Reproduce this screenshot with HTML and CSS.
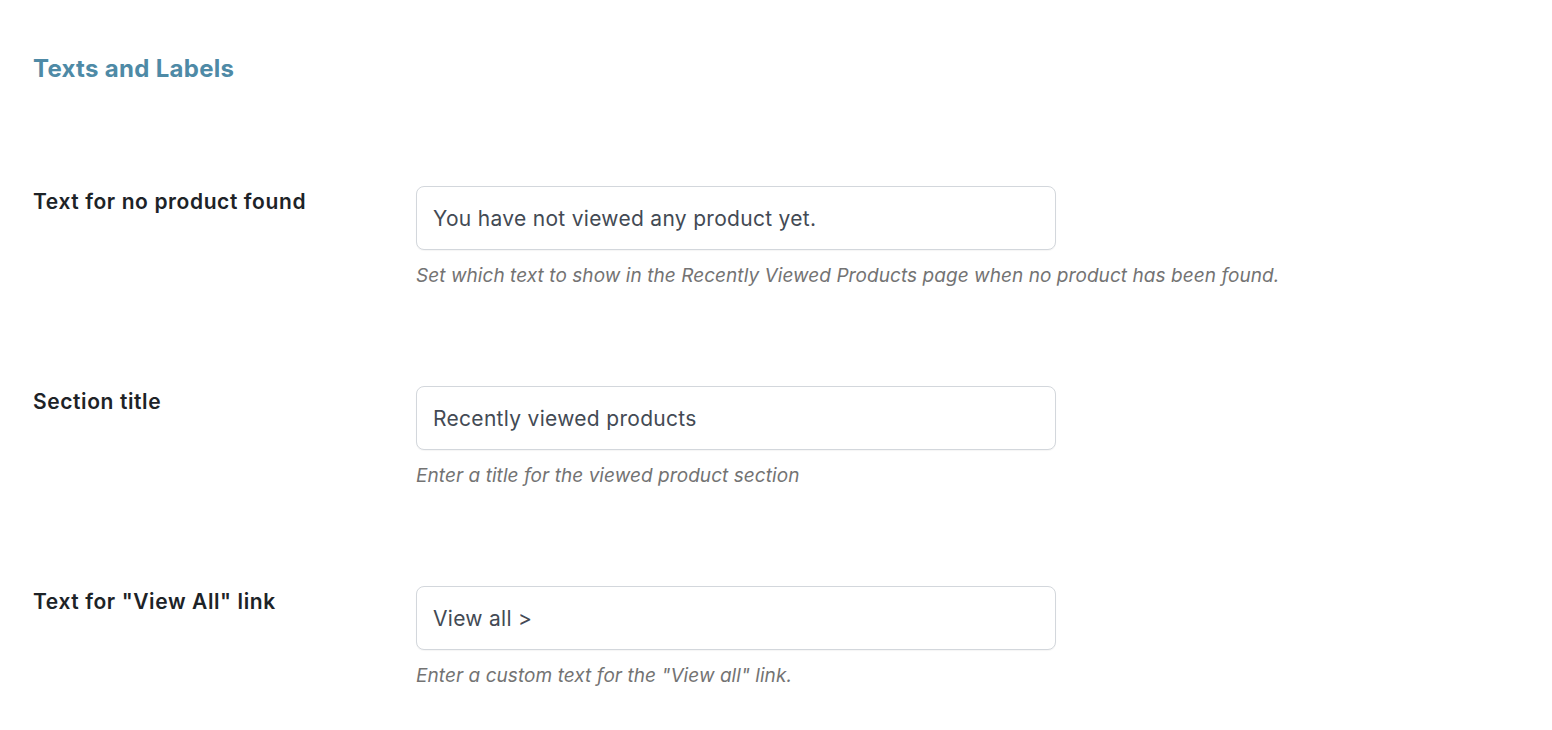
FILE: index.html
```html
<!DOCTYPE html>
<html>
<head>
<meta charset="utf-8">
<link rel="stylesheet" href="styles.css">
</head>
<body>
<div class="page">
  <h2 class="section-title">Texts and Labels</h2>
  <div class="rows">
    <div class="row">
      <label class="label">Text for no product found</label>
      <div class="field">
        <input class="input" type="text" value="You have not viewed any product yet.">
        <p class="desc">Set which text to show in the Recently Viewed Products page when no product has been found.</p>
      </div>
    </div>
    <div class="row">
      <label class="label">Section title</label>
      <div class="field">
        <input class="input" type="text" value="Recently viewed products">
        <p class="desc">Enter a title for the viewed product section</p>
      </div>
    </div>
    <div class="row">
      <label class="label">Text for "View All" link</label>
      <div class="field">
        <input class="input" type="text" value="View all >">
        <p class="desc">Enter a custom text for the "View all" link.</p>
      </div>
    </div>
  </div>
</div>
</body>
</html>
```
FILE: styles.css
```css
html, body {
  margin: 0;
  padding: 0;
  background: #ffffff;
}
.page {
  font-family: Inter, "Noto Sans", sans-serif;
  padding: 53px 0 0 33px;
}
.section-title {
  margin: 0;
  font-size: 24px;
  line-height: 32px;
  font-weight: 700;
  letter-spacing: 0.3px;
  color: #4e8aa6;
}
.rows {
  display: flex;
  flex-direction: column;
  gap: 98px;
  margin-top: 101px;
}
.row {
  display: grid;
  grid-template-columns: 383px 640px;
  align-items: start;
}
.label {
  font-size: 21px;
  line-height: 28px;
  font-weight: 600;
  letter-spacing: 0.6px;
  color: #1d2327;
  padding-top: 2px;
}
.field {
  display: flex;
  flex-direction: column;
}
.input {
  box-sizing: border-box;
  width: 640px;
  height: 64px;
  margin: 0;
  padding: 0 16px;
  border: 1px solid #d3d7dc;
  border-radius: 8px;
  background: #fff;
  font-family: Inter, "Noto Sans", sans-serif;
  font-size: 21px;
  letter-spacing: 0.3px;
  color: #434a54;
  outline: none;
  box-shadow: 0 1px 1px rgba(0,0,0,0.04);
}
.desc {
  margin: 14px 0 0;
  font-size: 19px;
  line-height: 24px;
  font-style: italic;
  letter-spacing: 0.06px;
  color: #737373;
  white-space: nowrap;
}
```
